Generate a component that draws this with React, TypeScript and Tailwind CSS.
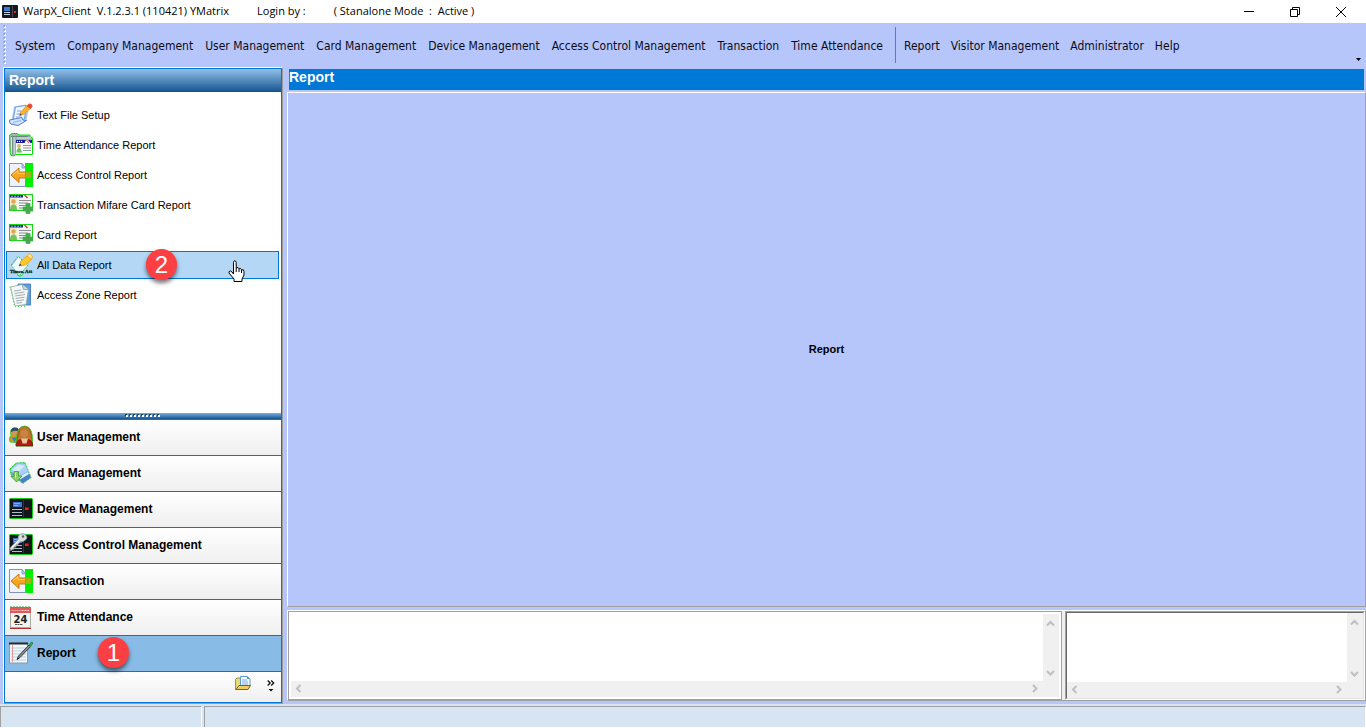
import type { ReactNode } from "react";

const MENU_LEFT = [
  "System",
  "Company Management",
  "User Management",
  "Card Management",
  "Device Management",
  "Access Control Management",
  "Transaction",
  "Time Attendance",
];
const MENU_RIGHT = ["Report", "Visitor Management", "Administrator", "Help"];

function Icon({ children }: { children: ReactNode }) {
  return (
    <svg viewBox="0 0 24 24" className="size-6 shrink-0" aria-hidden="true">
      {children}
    </svg>
  );
}

function TextFileIcon() {
  return (
    <Icon>
      <path d="M5 3.500 17 1.500 20 5 17.500 17 9 23 0 20.500 3 15Z" fill="#a9c6f2" />
      <path d="M6.500 4 17 2.500 15.500 16 4 18.500Z" fill="#eef5ff" stroke="#5c8fe0" strokeWidth=".8" />
      <path d="M.5 17 13 14.500Q13.500 18.500 17.500 17.500L9 22.500 2 21Q0 19.500.500 17Z" fill="#d3e4fc" stroke="#3f76d2" strokeWidth=".9" />
      <path d="M8 8h4M7.500 11h5M7 14h6" stroke="#7fa3e0" strokeWidth="1.200" />
      <path d="M4 19.500 12 17.500" stroke="#8db0ec" />
      <path d="M10.500 12.500 12 8.500 18 2.500 21.500 5.500 14.500 11.500Z" fill="#fbb22c" stroke="#d98a18" strokeWidth=".6" />
      <path d="M17.500 3 20 .500Q23.500.500 23.500 3.500L21.500 6Z" fill="#e8492f" />
      <path d="M10.500 12.500 11.300 10.500 12.800 11.800Z" fill="#333" />
    </Icon>
  );
}

function AttendanceIcon() {
  return (
    <Icon>
      <path d="M.5 2 3 .500H8L10 2H21V4L23.500 5V21.500H7L5 23 2 22.500 1 19Z" fill="#9db3b0" stroke="#00e400" />
      <path d="M2.500 3v18M5 4v17" stroke="#dfe9e8" fill="none" />
      <path d="M3.700 3v18M2 3.500h17" stroke="#6b8587" fill="none" />
      <path d="M8 5h14" stroke="#c7d5d4" strokeWidth="1.500" />
      <rect x="7" y="7" width="16" height="14" fill="#f7f8f8" />
      <rect x="7" y="7" width="16" height="3" fill="#171f9b" />
      <path d="M8 8.500h6" stroke="#fff" strokeDasharray="1 1" />
      <path d="m15.500 10 1.500-3h2l2.500 3Z" fill="#fff" />
      <path d="m17.500 7 2.500 3" stroke="#e63434" />
      <circle cx="10" cy="13" r="1.900" fill="#d9b173" />
      <path d="M7.500 19.500q0-4.500 2.500-4.500t2.800 4.500Z" fill="#6fbf5d" />
      <path d="M14 12.500h8M14 15h8M14 17.500h8" stroke="#9499a0" strokeWidth="1.200" />
    </Icon>
  );
}

function ArrowDocIcon() {
  return (
    <Icon>
      <rect x="16" width="8" height="24" fill="#00f000" />
      <path d="M.5.500H13L16.500 5v18.500H.500Z" fill="#edf2fb" stroke="#8292b8" />
      <path d="M13 .5V5h3.500Z" fill="#b9c8e6" stroke="#8292b8" strokeWidth=".7" />
      <path d="m2 12 8-7v4h6.500v6H10v4.500Z" fill="#f7a51d" stroke="#bd7107" strokeWidth=".9" />
      <path d="M16.500 9H22v6h-5.500Z" fill="#a3b312" />
      <path d="m4 11.700 5-4.300v3h7" stroke="#ffd36d" fill="none" />
    </Icon>
  );
}

function CardIcon() {
  return (
    <Icon>
      <rect x=".5" y="1.500" width="23" height="16" fill="#f4f6f4" stroke="#13d813" />
      <rect x="1" y="2" width="13" height="2.500" fill="#1a238f" />
      <path d="M2 3.200h10" stroke="#aab4f0" strokeDasharray="2 1" />
      <path d="m15.500 2 3 3" stroke="#e62525" strokeWidth="1.300" />
      <rect x="1" y="5" width="7" height="12" fill="#f2ecc8" />
      <circle cx="4.500" cy="8.500" r="2.200" fill="#dba95c" />
      <path d="M1 17q0-5.500 3.500-5.500T8 17Z" fill="#77c25e" />
      <path d="M10 7.500h12M10 10h9M10 12.500h7M10 15h4" stroke="#8b9094" strokeWidth="1.200" />
      <path d="M17 10.500h4V14h3v4h-3v2.500h-4V18h-3v-4h3Z" fill="#4aa551" stroke="#2cc238" strokeWidth=".8" />
    </Icon>
  );
}

function AllDataIcon() {
  return (
    <Icon>
      <path d="M2 12 9 3.500 19 12 10 23Z" fill="#eef8ff" stroke="#21d12a" strokeDasharray="2 1" />
      <path d="m9 4-6 8" fill="none" stroke="#7fb0d8" />
      <path d="m10 13 2-5 6-5 4.500 3.500-6 5.500Z" fill="#ffc928" stroke="#e79a10" strokeWidth=".8" />
      <path d="m18 3 2-2.500 3.500 2.500-1 3.500Z" fill="#ffe58a" stroke="#e59d20" strokeWidth=".7" />
      <path d="m10 13 1-2.200 1.700 1.500Z" fill="#363636" />
      <path d="m8 21.500 3 2 3-2" stroke="#31cf36" fill="none" />
      <text x="12" y="20" textAnchor="middle" fontSize="5" fontWeight="bold" fontFamily="Liberation Serif, serif" fill="#10291a" stroke="#10291a" strokeWidth=".3">Times, Att</text>
    </Icon>
  );
}

function ZoneIcon() {
  return (
    <Icon>
      <path d="M9 1h12.500v21H9Z" fill="#5f9edc" stroke="#3573b5" strokeWidth=".8" />
      <path d="M1.500 4 13 1.500l6.500 5L17 21.500 6 23Z" fill="#f4f8f7" stroke="#93a8a0" strokeWidth=".8" />
      <path d="m13 1.500 1.500 5 5 0" fill="#c4dcea" stroke="#778e95" strokeWidth=".7" />
      <path d="m5 8 7-1M5.500 10.500 15.500 9M6 13l10-1.500M6.500 15.500l9-1.300M7 18l8-1.200M7.500 20.200 13 19.500" stroke="#98a3a8" strokeWidth=".9" />
      <path d="M1 3.500 5.500 23.500H16" fill="none" stroke="#3ed252" strokeDasharray="1 2" />
    </Icon>
  );
}

function UsersIcon() {
  return (
    <Icon>
      <path d="M1 17Q-.500 12 2 10.500 0 3 6 3q6 0 5 8v7Z" fill="#d99b1b" stroke="#20c820" strokeWidth=".8" />
      <circle cx="5.500" cy="7.500" r="3.200" fill="#cf9660" />
      <path d="M2 7q-.500-4.500 4-4.500T10 7Q7 4.500 2 7Z" fill="#2f4a66" />
      <path d="M2.500 12.500 5.500 17l3-4.500Z" fill="#3a7cc2" />
      <path d="M7 19Q7 1 15.500 1T23.500 17L24 21H7Z" fill="#a85a17" stroke="#20d420" strokeWidth=".8" />
      <path d="M10.500 8q0-6 5-6t5.500 6q2 6 1 9H9.500q-1-4 1-9Z" fill="#c0762a" />
      <circle cx="15.300" cy="8.500" r="3.800" fill="#c58549" />
      <path d="M7 21q0-5 4.500-6.500h8Q24 16 24 21Z" fill="#b51616" stroke="#791111" strokeWidth=".6" />
      <path d="M12 13.500h7l-1.500 5h-4Z" fill="#e8c79a" />
    </Icon>
  );
}

function CardsIcon() {
  return (
    <Icon>
      <path d="M1 8 7 2l9-.5 3.500 9 2.500 6-8 6L2 14Z" fill="#6ea6e2" stroke="#1ddc28" strokeDasharray="2 1" />
      <path d="M2 8 8 2.500l8 0 3 8-9 5-8-5Z" fill="#a9d0f7" />
      <path d="m3 8.500 7-5 6 1.500-8 7Z" fill="#d6eafc" />
      <path d="m9 17 10-6 3 5.500-8.500 5.500Z" fill="#4b80c4" />
      <path d="m10 16 9-5 1 2-9 5.500Z" fill="#dfeefd" />
      <path d="M5 10.500h4.500V15H13l-5.500 6L2 15.500h3Z" fill="#8fd06a" stroke="#3b9d3a" strokeWidth=".8" />
      <path d="M6.500 11.500v5" stroke="#d4f3c0" fill="none" />
    </Icon>
  );
}

function DeviceArt() {
  return (
    <>
      <rect x=".5" y="1.500" width="23" height="20" rx="1" fill="#11171a" stroke="#16cc16" />
      <rect x="4" y="5" width="9" height="5" fill="#4175cf" />
      <path d="M5 6.500h6M5 8.500h4" stroke="#8fb6f2" strokeWidth=".8" />
      <path d="M3 12.500h10M3 15.500h10M3 18.500h10" stroke="#a9c1cc" />
      <path d="M14.500 3v17" stroke="#2b353a" />
      <rect x="16" y="10.500" width="3.500" height="2.500" fill="#ff1818" />
    </>
  );
}

function DeviceIcon() {
  return (
    <Icon>
      <DeviceArt />
    </Icon>
  );
}

function AccessIcon() {
  return (
    <Icon>
      <DeviceArt />
      <path d="m1 15 8-8.500Q8.500 2 12 .800 16 0 17.500 3T14 8.500L11 9l-2.500 3H7v2H5v2L1.500 17.500Z" fill="#d8dddf" stroke="#8d9397" strokeWidth=".8" />
      <circle cx="14" cy="3.500" r="1.200" fill="#59636a" />
      <path d="m3 14.500 7-7.500" stroke="#fff" />
    </Icon>
  );
}

function CalendarIcon() {
  return (
    <Icon>
      <rect x="1.500" y="2.500" width="20" height="20" fill="#f3f4f2" stroke="#a3ada0" />
      <path d="M1 2h21v6H1Z" fill="#dd5a5a" />
      <path d="M2 5.500h12" stroke="#f0928d" />
      <path d="M13 5.500h7" stroke="#fbe3e0" strokeDasharray="1 .5" />
      <path d="M2 1v2M5 1v2M8 1v2M11 1v2M14 1v2M17 1v2M20 1v2" stroke="#2fae48" />
      <text x="11.500" y="17.500" textAnchor="middle" fontSize="10" fontWeight="bold" fontFamily="DejaVu Sans, sans-serif" fill="#222">24</text>
      <path d="M6 19.500h8" stroke="#555" strokeDasharray="2 .5" />
      <path d="M1 23.500h21" stroke="#ad3434" />
    </Icon>
  );
}

function NoteIcon() {
  return (
    <Icon>
      <rect x=".5" y="2" width="18" height="20" fill="#f2f8fc" stroke="#8d9aa5" />
      <path d="M0 2.500h19" stroke="#292c31" strokeWidth="2" />
      <path d="M2 7h15M2 10h15M2 13h15M2 16h15M2 19h15" stroke="#b4cfe0" />
      <path d="M3.500 4v17" stroke="#e89a9a" />
      <path d="m8 18.500 1.500-3.500L20 4l1.500 1.500L11 16.500Z" fill="#8a9398" stroke="#23292c" strokeWidth=".9" />
      <path d="m20 4 2.500-3L24 2l-2.500 3.500Z" fill="#2fbf3a" stroke="#166d22" strokeWidth=".7" />
      <path d="m8 18.500.700-1.700 1.100 1Z" fill="#111" />
    </Icon>
  );
}

const REPORTS = [
  { label: "Text File Setup", icon: <TextFileIcon /> },
  { label: "Time Attendance Report", icon: <AttendanceIcon /> },
  { label: "Access Control Report", icon: <ArrowDocIcon /> },
  { label: "Transaction Mifare Card Report", icon: <CardIcon /> },
  { label: "Card Report", icon: <CardIcon /> },
  { label: "All Data Report", icon: <AllDataIcon />, active: true },
  { label: "Access Zone Report", icon: <ZoneIcon /> },
];

const SECTIONS = [
  { label: "User Management", icon: <UsersIcon /> },
  { label: "Card Management", icon: <CardsIcon /> },
  { label: "Device Management", icon: <DeviceIcon /> },
  { label: "Access Control Management", icon: <AccessIcon /> },
  { label: "Transaction", icon: <ArrowDocIcon /> },
  { label: "Time Attendance", icon: <CalendarIcon /> },
  { label: "Report", icon: <NoteIcon />, active: true },
];

function TitleBar() {
  return (
    <header className="flex h-[23px] shrink-0 items-center bg-white pr-0.5 pl-0.5 font-['Open_Sans',sans-serif] text-[11px] text-black">
      <svg viewBox="0 0 16 14" className="h-3.5 w-4" aria-hidden="true">
        <rect width="16" height="13" rx="1" fill="#161a20" />
        <rect x="2" y="2" width="6" height="4" fill="#3f79cf" />
        <path d="M2 7.500h6M2 9.500h6" stroke="#c2cddc" />
        <path d="M10.500 1v11" stroke="#454b54" />
        <rect x="12" y="6" width="2" height="2" fill="#e02828" />
      </svg>
      <h1 className="ml-[5px] whitespace-pre">WarpX_Client  V.1.2.3.1 (110421) YMatrix</h1>
      <span className="ml-7">Login by :</span>
      <span className="ml-7 whitespace-pre">( Stanalone Mode  :  Active )</span>
      <div className="ml-auto flex self-stretch">
        <button aria-label="Minimize" className="flex w-[46px] items-center justify-center">
          <svg width="10" height="10" aria-hidden="true"><path d="M0 4.500h10" stroke="#000" /></svg>
        </button>
        <button aria-label="Restore" className="flex w-[46px] items-center justify-center">
          <svg width="10" height="10" fill="none" stroke="#000" aria-hidden="true">
            <path d="M.5 2.500h7v7h-7ZM2.500 2.500v-2h7v7h-2" />
          </svg>
        </button>
        <button aria-label="Close" className="flex w-[46px] items-center justify-center">
          <svg width="10" height="10" stroke="#000" aria-hidden="true"><path d="m0 0 10 10M10 0 0 10" /></svg>
        </button>
      </div>
    </header>
  );
}

function MenuBar() {
  return (
    <nav className="flex h-11 shrink-0 items-center pl-[3px] font-['DejaVu_Sans_Condensed','Noto_Sans',sans-serif] text-xs text-[#0c0c18]">
      <svg width="4" height="40" className="mr-2" aria-hidden="true">
        {Array.from({ length: 10 }, (_, i) => (
          <g key={i}>
            <rect x="1" y={i * 4 + 1} width="2" height="2" fill="#fff" />
            <rect x="0" y={i * 4} width="2" height="2" fill="#9aa8d4" />
          </g>
        ))}
      </svg>
      <div className="flex gap-3 pt-0.5">
        {MENU_LEFT.map((m) => (
          <button key={m} className="whitespace-nowrap">{m}</button>
        ))}
      </div>
      <span className="mr-2 ml-3 h-9 w-px bg-[#6b78a8]" />
      <div className="flex gap-[11px] pt-0.5">
        {MENU_RIGHT.map((m) => (
          <button key={m} className="whitespace-nowrap">{m}</button>
        ))}
      </div>
      <button aria-label="More menu items" className="mr-[5px] ml-auto self-end pb-1.5">
        <svg width="5" height="3" aria-hidden="true"><path d="M0 0h5L2.500 3Z" fill="#000" /></svg>
      </button>
    </nav>
  );
}

function Badge({ n, place }: { n: number; place: string }) {
  return (
    <span
      className={`${place} absolute flex size-[31px] items-center justify-center rounded-full bg-[#fb3f42] font-['Liberation_Sans',sans-serif] text-2xl font-normal text-white shadow-[0_3px_4px_rgba(0,0,0,0.55)]`}
    >
      {n}
    </span>
  );
}

function HandCursor() {
  return (
    <svg viewBox="0 0 17 23" className="absolute top-[9px] left-[222px] h-[23px] w-[17px]" aria-hidden="true">
      <path
        d="M5.500 14V2.500Q5.500.8 6.800.8T8.200 2.500V8Q10.500 6.500 11 8.800 13 7.800 13.500 9.800 16 9 16 11.500V15L14 19V21.500H6V19L1 13Q.5 11 2.500 11Q4 11.500 5.500 14Z"
        fill="#fff"
        stroke="#000"
      />
      <path d="M8.200 8v4M11 9v3M13.500 10v3" stroke="#000" />
    </svg>
  );
}

function Sidebar() {
  return (
    <aside className="flex w-[280px] shrink-0 flex-col border border-t-white border-r-[#9c9c9c] border-b-[#9c9c9c] border-l-white font-['Liberation_Sans',sans-serif] text-black">
      <div className="flex min-h-0 flex-1 flex-col border border-[#0078d7] bg-white">
        <h2 className="flex h-[23px] shrink-0 items-center bg-linear-to-b from-[#92c0e8] to-[#0f5590] pb-0.5 pl-1 text-sm font-bold text-white">
          Report
        </h2>
        <ul className="flex min-h-0 flex-1 flex-col gap-0.5 pt-[9px] pr-0.5 pl-px text-[11px]">
          {REPORTS.map((r) => (
            <li key={r.label} className="relative">
              <button
                className={`flex h-7 w-full items-center gap-1 border pl-0.5 text-left ${
                  r.active ? "border-[#0078d7] bg-[#b3d7f5]" : "border-transparent"
                }`}
              >
                {r.icon}
                {r.label}
              </button>
              {r.active && <Badge n={2} place="-top-0.5 left-[140px]" />}
              {r.active && <HandCursor />}
            </li>
          ))}
        </ul>
        <div className="flex h-1.5 shrink-0 items-center justify-center bg-linear-to-b from-[#78afe0] to-[#0f5590]">
          <svg width="36" height="4" aria-hidden="true">
            {Array.from({ length: 9 }, (_, i) => (
              <g key={i}>
                <rect x={i * 4} y="0" width="2" height="2" fill="#183f55" />
                <rect x={i * 4 + 1} y="1" width="2" height="2" fill="#fff" />
              </g>
            ))}
          </svg>
        </div>
        <ul className="shrink-0 text-xs font-bold">
          {SECTIONS.map((s) => (
            <li key={s.label} className="relative">
              <button
                className={`flex h-9 w-full items-center gap-1 border-t border-[#0078d7] pb-0.5 pl-1 text-left ${
                  s.active ? "bg-[#88bbe6]" : "bg-linear-to-b from-white to-[#efefef]"
                }`}
              >
                {s.icon}
                {s.label}
              </button>
              {s.active && <Badge n={1} place="top-0.5 left-[93px]" />}
            </li>
          ))}
        </ul>
        <div className="flex h-[31px] shrink-0 items-start justify-end gap-4 border-t border-[#0078d7] bg-linear-to-b from-white to-[#efefef] pt-1 pr-1.5">
          <button aria-label="Open folder">
            <svg width="16" height="15" viewBox="0 0 16 15" aria-hidden="true">
              <path d="M.5 13.500V3.500L2 2h3l1 1.500h7v9Z" fill="#e3dc79" stroke="#9d9345" />
              <path d="M5.500 10V.5h7L15 3v7Z" fill="#f7fbff" stroke="#5c9ccc" />
              <path d="M12 .5V3h3" fill="#36a6a6" />
              <path d="M7 4h5M7 6h6M7 8h6" stroke="#7aa8e8" />
              <path d="M1 13.500 4 9.500h11.500l-2.500 4Z" fill="#f1cf5c" stroke="#8a5a20" />
            </svg>
          </button>
          <button aria-label="Configure buttons" className="pt-1">
            <svg width="8" height="13" viewBox="0 0 8 13" aria-hidden="true">
              <path d="m.7.500 2.500 2.500L.7 5.500M4.200.500 6.700 3 4.200 5.500" fill="none" stroke="#111" strokeWidth="1.300" />
              <path d="M1.500 9h5L4 11.500Z" fill="#111" />
            </svg>
          </button>
        </div>
      </div>
    </aside>
  );
}

const CHEVRONS = {
  up: "M1 6.500 4.500 3 8 6.500",
  down: "M1 3 4.500 6.500 8 3",
  left: "M6.500 1 3 4.500 6.500 8",
  right: "M3 1 6.500 4.500 3 8",
};

function ScrollButton({ dir, label }: { dir: keyof typeof CHEVRONS; label: string }) {
  return (
    <button aria-label={label} className="flex size-4 shrink-0 items-center justify-start pb-0.5 pl-[3px]">
      <svg width="9" height="9" fill="none" stroke="#bfbfbf" strokeWidth="2" aria-hidden="true">
        <path d={CHEVRONS[dir]} />
      </svg>
    </button>
  );
}

function LogBox({ label }: { label: string }) {
  return (
    <div className="grid min-w-0 flex-1 grid-cols-[minmax(0,1fr)_16px] grid-rows-[minmax(0,1fr)_16px] bg-[#f0f0f0]">
      <textarea aria-label={label} readOnly className="block size-full resize-none bg-white outline-none" />
      <div className="flex flex-col justify-between pt-0.5">
        <ScrollButton dir="up" label={`${label}: scroll up`} />
        <ScrollButton dir="down" label={`${label}: scroll down`} />
      </div>
      <div className="flex justify-between">
        <ScrollButton dir="left" label={`${label}: scroll left`} />
        <ScrollButton dir="right" label={`${label}: scroll right`} />
      </div>
    </div>
  );
}

function Workspace() {
  return (
    <main className="flex min-w-0 flex-1 flex-col pl-1 font-['Liberation_Sans',sans-serif]">
      <h2 className="m-0.5 flex h-[21px] shrink-0 items-start bg-[#0078d7] text-sm leading-4 font-bold text-white">
        Report
      </h2>
      <section className="flex min-h-0 flex-1 items-center justify-center border border-t-white border-r-[#a0a0a0] border-b-[#a0a0a0] border-l-white text-[11px] font-bold text-black">
        Report
      </section>
      <div className="my-[3px] flex h-[91px] shrink-0 border border-t-white border-r-[#a0a0a0] border-b-[#a0a0a0] border-l-white bg-[#f0f0f0]">
        <div className="flex min-w-0 flex-1 border border-[#a0a0a0] bg-white p-0.5">
          <LogBox label="Event log" />
        </div>
        <div className="ml-[3px] flex w-[300px] border border-t-[#a0a0a0] border-r-white border-b-white border-l-[#a0a0a0]">
          <div className="flex min-w-0 flex-1 border border-t-[#696969] border-r-[#e3e3e3] border-b-[#e3e3e3] border-l-[#696969]">
            <LogBox label="Device log" />
          </div>
        </div>
      </div>
    </main>
  );
}

export default function App() {
  return (
    <div className="flex h-screen flex-col overflow-hidden bg-[#b6c6fa]">
      <TitleBar />
      <MenuBar />
      <div className="flex min-h-0 flex-1 pl-[3px]">
        <Sidebar />
        <Workspace />
      </div>
      <footer className="flex h-6 shrink-0 gap-0.5 border-b border-white bg-[#d7e4f2] pt-0.5">
        <div className="w-[202px] border-t border-r border-l border-t-[#a0a0a0] border-r-white border-l-[#a0a0a0]" />
        <div className="flex-1 border-t border-r border-l border-t-[#a0a0a0] border-r-white border-l-[#a0a0a0]" />
      </footer>
    </div>
  );
}
